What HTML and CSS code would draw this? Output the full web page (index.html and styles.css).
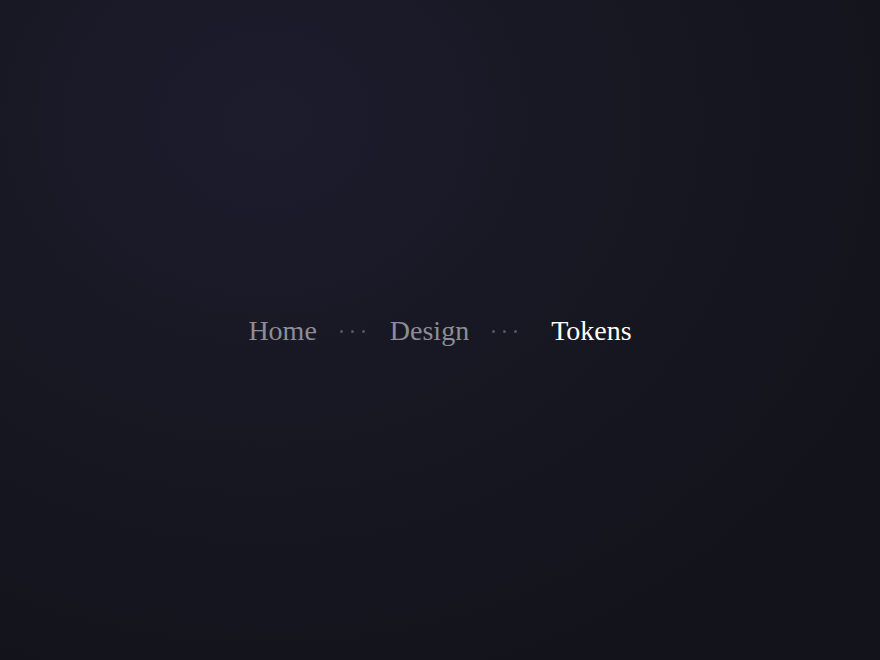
FILE: index.html
```html
<!DOCTYPE html>
<html>
<head>
<meta charset="utf-8">
<link rel="stylesheet" href="styles.css">
</head>
<body>
<main class="stage">
  <nav class="crumbs" aria-label="Breadcrumb">
    <a class="crumb" href="#">Home</a>
    <span class="sep" aria-hidden="true"><i></i><i></i><i></i></span>
    <a class="crumb" href="#">Design</a>
    <span class="sep" aria-hidden="true"><i></i><i></i><i></i></span>
    <span class="crumb current" aria-current="page">Tokens</span>
  </nav>
</main>
</body>
</html>
```
FILE: styles.css
```css
html, body {
  margin: 0;
  height: 100%;
}
body {
  background: #14141c;
}
.stage {
  height: 100%;
  display: flex;
  align-items: center;
  justify-content: center;
  background: radial-gradient(ellipse 700px 600px at 265px 120px, #1c1c2d 0%, #181824 45%, #13131b 100%);
}
.crumbs {
  display: flex;
  align-items: center;
  font-family: "Liberation Serif", "Times New Roman", serif;
  font-size: 28px;
  line-height: 32px;
  padding-top: 2px;
}
.crumb {
  color: #8d8d98;
  text-decoration: none;
}
.current {
  color: #ffffff;
  margin-left: 9px;
}
.sep {
  display: flex;
  gap: 8px;
  margin: 0 25px 0 23px;
}
.sep i {
  display: block;
  width: 3px;
  height: 3px;
  border-radius: 50%;
  background: #555564;
}
```
